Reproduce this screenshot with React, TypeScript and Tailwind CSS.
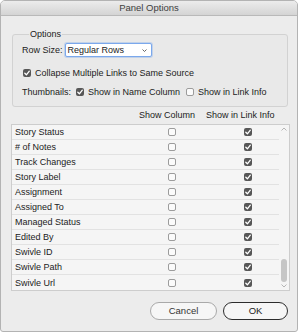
import React from 'react';

const rows = [
  'Story Status',
  '# of Notes',
  'Track Changes',
  'Story Label',
  'Assignment',
  'Assigned To',
  'Managed Status',
  'Edited By',
  'Swivle ID',
  'Swivle Path',
  'Swivle Url',
];

const Box = ({ checked }: { checked: boolean }) =>
  checked ? (
    <span className="flex h-[8px] w-[8px] shrink-0 items-center justify-center rounded-[2px] bg-[#575757]">
      <svg width="8" height="8" viewBox="0 0 8 8">
        <path d="M1.8 4.2 L3.4 5.8 L6.3 2.2" fill="none" stroke="#fff" strokeWidth="1.3" strokeLinecap="round" strokeLinejoin="round" />
      </svg>
    </span>
  ) : (
    <span className="block h-[8px] w-[8px] shrink-0 rounded-[2px] border border-[#9c9c9c] bg-[#fbfbfb]" />
  );

const Chevron = ({ up }: { up?: boolean }) => (
  <svg width="6" height="4" viewBox="0 0 6 4">
    <path d={up ? 'M0.5 3.5 L3 1 L5.5 3.5' : 'M0.5 0.5 L3 3 L5.5 0.5'} fill="none" stroke="#b5b5b5" strokeWidth="1" />
  </svg>
);

export default function App() {
  return (
    <div className="h-[332px] w-[300px] bg-white font-['Liberation_Sans',Arial,sans-serif] text-[9px] leading-[10px] text-[#222]">
      <div className="flex h-[332px] w-[298px] flex-col overflow-hidden rounded-t-[5px] rounded-b-[3px] border border-[#b3b3b3] bg-[#ececec]">
        {/* title bar */}
        <div className="flex h-[15px] shrink-0 items-center justify-center border-b border-[#b9b9b9] bg-gradient-to-b from-[#ececec] to-[#d4d4d4] text-[9.5px] text-[#404040]">
          Panel Options
        </div>

        {/* options group */}
        <fieldset className="ml-[11px] mt-[13px] w-[276px] rounded-[3px] border border-[#d2d2d2] bg-[#e9e9e9] pb-[8px] pl-[9px]">
          <legend className="ml-[7px] h-[10px] px-[1px]">Options</legend>
          <div className="mt-[4px] flex h-[14px] items-center">
            <span>Row Size:</span>
            <div className="ml-[2px] flex h-[14px] w-[87px] items-center justify-between rounded-[2px] border border-[#7ba8ec] bg-white pl-[2px] pr-[4px] shadow-[0_0_0_1px_rgba(122,168,236,0.35)]">
              <span>Regular Rows</span>
              <svg width="5" height="3" viewBox="0 0 5 3">
                <path d="M0.5 0.5 L2.5 2.5 L4.5 0.5" fill="none" stroke="#555" strokeWidth="0.9" />
              </svg>
            </div>
          </div>
          <div className="ml-[1px] mt-[10px] flex h-[12px] items-center gap-[4px]">
            <Box checked />
            <span>Collapse Multiple Links to Same Source</span>
          </div>
          <div className="mt-[7px] flex h-[12px] items-center">
            <span>Thumbnails:</span>
            <span className="ml-[5px]">
              <Box checked />
            </span>
            <span className="ml-[4px]">Show in Name Column</span>
            <span className="ml-[6px]">
              <Box checked={false} />
            </span>
            <span className="ml-[4px]">Show in Link Info</span>
          </div>
        </fieldset>

        {/* column headers */}
        <div className="mt-[2px] flex h-[12px] items-center pl-[138px]">
          <span>Show Column</span>
          <span className="ml-[11px]">Show in Link Info</span>
        </div>

        {/* list */}
        <div className="ml-[10px] mt-[3px] flex w-[279px] border border-[#cdcdcd] bg-[#f5f5f5]">
          <div className="flex-1">
            {rows.map((r) => (
              <div key={r} className="flex h-[15px] items-center border-b border-[#e2e2e2] pl-[3px] last:border-b-0">
                <span className="w-[153px]">{r}</span>
                <Box checked={false} />
                <span className="ml-[68px]">
                  <Box checked />
                </span>
              </div>
            ))}
          </div>
          <div className="flex w-[10px] flex-col items-center">
            <div className="flex h-[8px] items-center">
              <Chevron up />
            </div>
            <div className="flex-1" />
            <div className="h-[23px] w-[6px] rounded-full bg-[#c6c6c6]" />
            <div className="flex h-[8px] items-center">
              <Chevron />
            </div>
          </div>
        </div>

        {/* buttons */}
        <div className="mt-[11px] flex justify-end gap-[6px] pr-[9px]">
          <button className="h-[18px] w-[67px] rounded-full border border-[#a9a9a9] bg-[#f6f6f6] text-[9.5px] text-[#333]">
            Cancel
          </button>
          <button className="h-[18px] w-[65px] rounded-full border-[1.5px] border-[#2d2d2d] bg-[#f6f6f6] text-[9.5px] text-[#222]">
            OK
          </button>
        </div>
      </div>
    </div>
  );
}
